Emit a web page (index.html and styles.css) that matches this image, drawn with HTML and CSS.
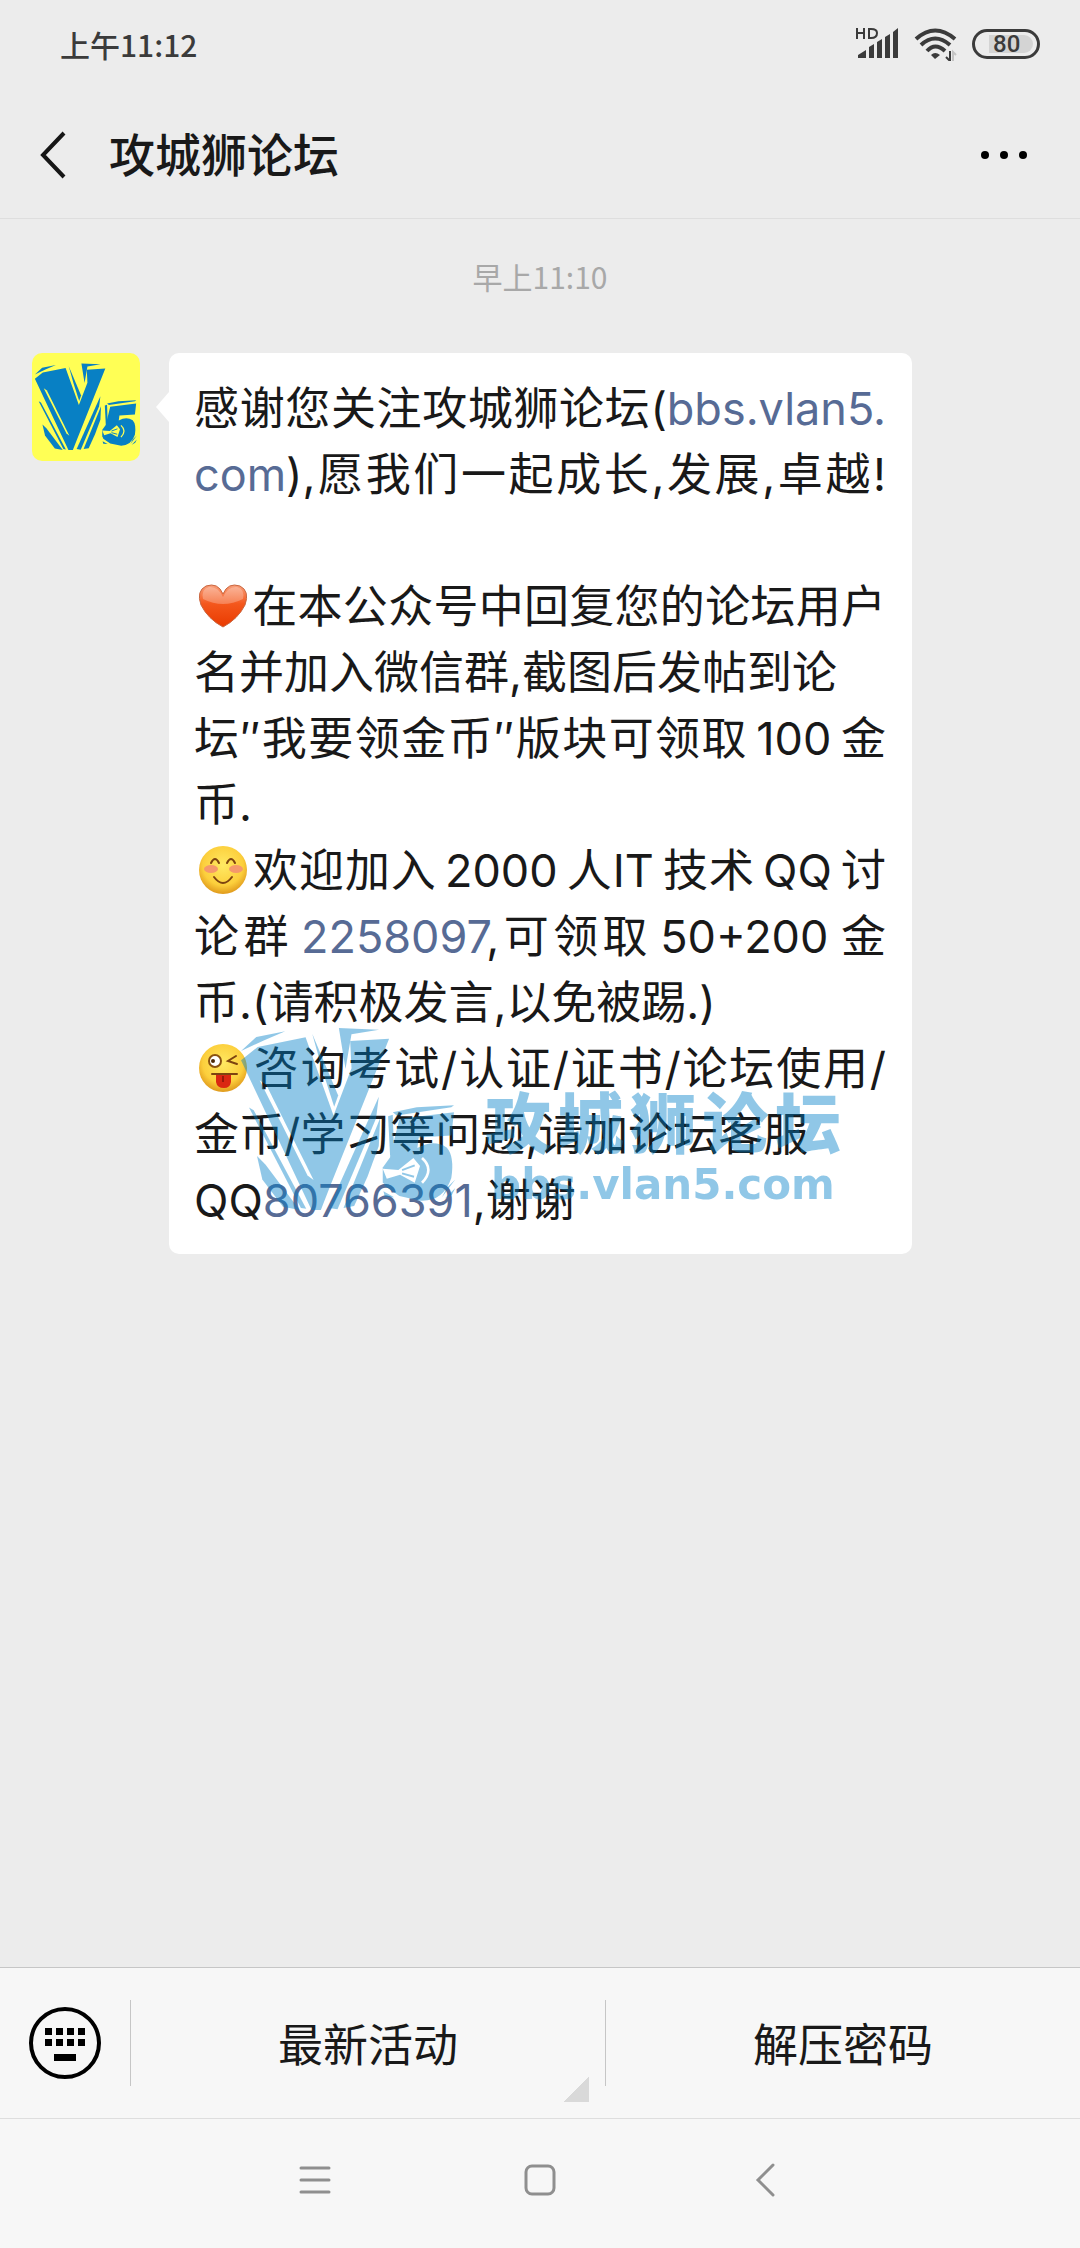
FILE: index.html
```html
<!DOCTYPE html>
<html lang="zh-CN">
<head>
    <meta charset="UTF-8">
    <title>攻城狮论坛</title>
    <meta name="viewport" content="width=device-width, initial-scale=1.0">
    <link rel="stylesheet" href="styles.css">
</head>
<body>

    <!-- Logo used by the avatar and the watermark -->
    <svg class="sprite" aria-hidden="true">
        <defs>
            <mask id="logo-cuts" maskUnits="userSpaceOnUse" x="60" y="50" width="680" height="580">
                <rect x="60" y="50" width="680" height="580" fill="#fff"/>
                <path d="M128 222 L148 236 L290 522 L272 508 Z" fill="#000"/>
                <path d="M498 488 L545 492 L590 456 L610 480 L594 530 L550 506 L510 518 Z" fill="#000"/>
                <path d="M616 456 Q654 490 616 530" fill="none" stroke="#000" stroke-width="8"/>
                <path d="M556 492 L594 478 M556 502 L592 512" stroke="#fff" stroke-width="6"/>
            </mask>
            <symbol id="v5" viewBox="70 62 650 556">
                <g fill="currentColor" mask="url(#logo-cuts)">
                    <path d="M72 134 L118 92 L205 75 L142 102 Z"/>
                    <path d="M72 162 L122 122 L266 93 L350 328 L404 186 L400 104 L517 97 L340 540 L312 612 L284 612 Z"/>
                    <path d="M366 65 L487 70 L404 84 L386 188 Z"/>
                    <path d="M286 82 L364 268 L352 302 L316 190 Z"/>
                    <path d="M96 304 L110 312 L268 608 L252 606 Z"/>
                    <path d="M120 450 L146 476 L248 612 L198 602 L136 520 Z"/>
                    <path d="M486 272 L478 336 L362 610 L336 606 Z"/>
                    <path d="M490 336 L486 420 L452 512 L412 600 L380 606 Z"/>
                    <path d="M528 318 L600 303 L712 297 L704 303 L540 328 Z"/>
                    <path d="M514 330 L528 326 L532 440 L520 450 Z"/>
                    <path d="M548 338 L712 318 L704 388 L606 394 L602 426 Q650 398 690 424 Q714 450 704 516 Q680 588 610 584 L548 570 L504 540 L500 508 L560 520 Q620 524 620 492 Q600 450 526 478 L520 452 Z"/>
                    <path d="M498 484 L530 440 L610 430 L640 480 L610 540 L540 560 L498 530 Z"/>
                    <path d="M500 556 L532 574 L504 572 Z"/>
                    <path d="M716 520 L676 574 L690 546 Z M716 546 L684 578 L706 566 Z"/>
                </g>
            </symbol>
            <radialGradient id="face" cx="50%" cy="40%" r="60%">
                <stop offset="0" stop-color="#ffe963"/>
                <stop offset="0.7" stop-color="#fccf3c"/>
                <stop offset="1" stop-color="#e09a1c"/>
            </radialGradient>
            <linearGradient id="heart" x1="0" y1="0" x2="0" y2="1">
                <stop offset="0" stop-color="#f9a07c"/>
                <stop offset="0.45" stop-color="#f4571c"/>
                <stop offset="1" stop-color="#e93a00"/>
            </linearGradient>
        </defs>
    </svg>

    <div class="screen">
        <header class="top">
            <div class="status-bar">
                <span>上午11:12</span>
                <div class="status-icons">
                    <svg class="signal" viewBox="0 0 44 34" aria-hidden="true">
                        <path d="M1 12V1M8 12V1M1 6H8M13 2V11H15Q21 11 21 6Q21 2 15 2Z" fill="none" stroke="#3b3b3b" stroke-width="2"/>
                        <path d="M2 28L10 23V31H2ZM13 20L18 17V31H13ZM21 15L26 12V31H21ZM29 10L34 7V31H29ZM37 5L42 1V31H37Z" fill="#3b3b3b"/>
                    </svg>
                    <svg class="wifi" viewBox="0 0 44 34" aria-hidden="true">
                        <g fill="none" stroke="#3b3b3b" stroke-width="4">
                            <path d="M2 12Q21 -5 41 12"/>
                            <path d="M7 18Q21 5 36 18"/>
                            <path d="M13 24Q21 15 31 24"/>
                        </g>
                        <path d="M17 28Q21 24 26 28L21 32Z" fill="#3b3b3b"/>
                        <path d="M36 24V34L32 30" fill="none" stroke="#3b3b3b" stroke-width="2"/>
                        <path d="M39 34V25L42 28" fill="none" stroke="#c4c4c4" stroke-width="2"/>
                    </svg>
                    <span class="battery"><span class="battery-level">80</span></span>
                </div>
            </div>
            <div class="title-bar">
                <button class="icon-button" aria-label="返回">
                    <svg class="back" viewBox="0 0 28 48"><path d="M25 2L4 24L25 46" fill="none" stroke="#161616" stroke-width="4"/></svg>
                </button>
                <h1>攻城狮论坛</h1>
                <button class="icon-button" aria-label="更多">
                    <svg class="more" viewBox="0 0 48 10"><circle cx="5" cy="5" r="4"/><circle cx="24" cy="5" r="4"/><circle cx="43" cy="5" r="4"/></svg>
                </button>
            </div>
        </header>

        <main class="chat">
            <p class="time">早上11:10</p>
            <div class="message">
                <div class="avatar"><svg viewBox="0 0 104 88"><use href="#v5" width="104" height="88"/></svg></div>
                <div class="bubble">
                    <p class="line full">感谢您关注攻城狮论坛(<a href="#">bbs.vlan5.</a></p>
                    <p class="line full"><a href="#">com</a>),愿我们一起成长,发展,卓越!</p>
                    <p class="line"></p>
                    <p class="line full"><svg class="emoji" viewBox="0 0 50 50"><path d="M25 46Q10 38 3 24Q-2 10 8 5Q20 1 25 13Q30 1 42 5Q52 10 47 24Q40 38 25 46Z" fill="url(#heart)" stroke="#c9663f" stroke-width="1"/><path d="M5 18Q3 8 11 6Q20 5 25 16Q30 5 39 6Q47 8 45 18Q25 28 5 18Z" fill="#fff" opacity="0.25"/></svg>在本公众号中回复您的论坛用户</p>
                    <p class="line">名并加入微信群,截图后发帖到论</p>
                    <p class="line full">坛″我要领金币″版块可领取&thinsp;100&thinsp;金</p>
                    <p class="line">币.</p>
                    <p class="line full"><svg class="emoji" viewBox="0 0 50 50"><circle cx="25" cy="25" r="24" fill="url(#face)"/><ellipse cx="13" cy="24" rx="7" ry="4" fill="#f5996b"/><ellipse cx="38" cy="24" rx="7" ry="4" fill="#f5996b"/><path d="M13 18Q17 10 21 18M29 18Q33 10 37 18M16 32Q25 44 34 32" fill="none" stroke="#7d4310" stroke-width="2" stroke-linecap="round"/></svg>欢迎加入&thinsp;2000&thinsp;人IT&thinsp;技术&thinsp;QQ&thinsp;讨</p>
                    <p class="line full">论群&thinsp;<a href="#">2258097</a>,可领取&thinsp;50+200&thinsp;金</p>
                    <p class="line">币.(请积极发言,以免被踢.)</p>
                    <p class="line full"><svg class="emoji" viewBox="0 0 50 50"><circle cx="25" cy="25" r="24" fill="url(#face)"/><circle cx="17" cy="18" r="6" fill="#fff" stroke="#8a5210" stroke-width="2"/><circle cx="15" cy="18" r="2" fill="#4d2a08"/><path d="M38 13L30 18L39 21M14 31H39" fill="none" stroke="#7d4310" stroke-width="2" stroke-linecap="round"/><path d="M18 32H33V39Q32 45 26 45Q19 45 18 39Z" fill="#da2712"/><path d="M25 33V39" stroke="#97180a" stroke-width="2"/></svg>咨询考试/认证/证书/论坛使用/</p>
                    <p class="line">金币/学习等问题,请加论坛客服</p>
                    <p class="line">QQ<a href="#">80766391</a>,谢谢</p>
                    <div class="watermark" aria-hidden="true">
                        <svg viewBox="0 0 217 185"><use href="#v5" width="217" height="185"/></svg>
                        <div class="watermark-text">
                            <p class="watermark-name">攻城狮论坛</p>
                            <p class="watermark-url">bbs.vlan5.com</p>
                        </div>
                    </div>
                </div>
            </div>
        </main>

        <footer>
            <div class="menu-bar">
                <button class="keyboard" aria-label="键盘">
                    <svg viewBox="0 0 74 74">
                        <circle cx="37" cy="37" r="34" fill="none" stroke="#000" stroke-width="4"/>
                        <path d="M17 22h7v7h-7zM28 22h7v7h-7zM39 22h7v7h-7zM50 22h7v7h-7zM17 33h7v7h-7zM28 33h7v7h-7zM39 33h7v7h-7zM50 33h7v7h-7zM26 48h22v7h-22z"/>
                    </svg>
                </button>
                <button class="menu-item has-more">最新活动</button>
                <button class="menu-item">解压密码</button>
            </div>
            <nav class="system-nav">
                <button aria-label="最近任务"><svg viewBox="0 0 36 36"><path d="M4 6H32M4 18H32M4 30H32"/></svg></button>
                <button aria-label="主屏幕"><svg viewBox="0 0 36 36"><rect x="4" y="4" width="28" height="28" rx="6"/></svg></button>
                <button aria-label="返回"><svg viewBox="0 0 36 36"><path d="M26 3L11 18L26 33"/></svg></button>
            </nav>
        </footer>
    </div>

</body>
</html>
```

FILE: styles.css
```css
* {
    margin: 0;
    padding: 0;
    box-sizing: border-box;
}

body {
    font-family: "Noto Sans CJK SC", sans-serif;
    background-color: #ececec;
    color: #191919;
}

button {
    border: none;
    background: none;
    font: inherit;
    color: inherit;
    cursor: pointer;
}

svg {
    display: block;
}

a {
    color: #576b95;
    text-decoration: none;
}

.sprite {
    position: absolute;
    width: 0;
    height: 0;
}

.screen {
    display: flex;
    flex-direction: column;
    min-height: 100vh;
}

/* Status bar and title */
.top {
    border-bottom: 1px solid #dedede;
}

.status-bar {
    display: flex;
    align-items: center;
    justify-content: space-between;
    height: 88px;
    padding: 0 40px 0 60px;
    font-size: 30px;
    font-weight: 500;
    color: #3b3b3b;
}

.status-icons {
    display: flex;
    align-items: center;
    gap: 14px;
}

.signal,
.wifi {
    width: 44px;
    height: 34px;
}

.battery {
    width: 68px;
    height: 30px;
    padding: 3px 4px 3px 14px;
    border: 3px solid #3b3b3b;
    border-radius: 15px;
}

.battery-level {
    display: block;
    height: 18px;
    padding-left: 4px;
    border-radius: 0 9px 9px 0;
    background-color: #d4d4d4;
    font-family: Roboto, sans-serif;
    font-size: 24px;
    line-height: 18px;
}

.title-bar {
    display: flex;
    align-items: center;
    height: 130px;
    padding: 4px 52px 0 39px;
}

.title-bar h1 {
    flex: 1;
    margin-left: 42px;
    padding-bottom: 6px;
    font-size: 46px;
    font-weight: 500;
    line-height: 66px;
}

.back {
    width: 28px;
    height: 48px;
}

.more {
    width: 48px;
    height: 10px;
}

/* Chat */
.chat {
    flex: 1;
    padding: 36px 32px;
}

.time {
    margin-bottom: 56px;
    font-size: 30px;
    line-height: 42px;
    text-align: center;
    color: #a8a8a8;
}

.message {
    display: flex;
    align-items: flex-start;
    gap: 29px;
}

.avatar {
    display: flex;
    align-items: center;
    justify-content: center;
    flex: none;
    width: 108px;
    height: 108px;
    border-radius: 10px;
    background-color: #ffff55;
    color: #0880c4;
}

.avatar svg {
    width: 104px;
    height: 88px;
}

.bubble {
    position: relative;
    flex: 0 1 743px;
    min-width: 0;
    padding: 23px 26px 20px 25px;
    border-radius: 10px;
    background-color: #fff;
    font-family: Inter, "Noto Sans CJK SC", sans-serif;
    font-size: 45px;
    line-height: 66px;
}

.bubble::before {
    content: "";
    position: absolute;
    top: 39px;
    left: -13px;
    border: solid transparent;
    border-width: 15px 13px 15px 0;
    border-right-color: #fff;
}

.line {
    height: 66px;
    white-space: nowrap;
}

.full {
    text-align-last: justify;
}

.emoji {
    display: inline-block;
    width: 50px;
    height: 50px;
    margin: 0 4px;
    vertical-align: -8px;
}

.watermark {
    position: absolute;
    right: 71px;
    bottom: 39px;
    display: flex;
    gap: 28px;
    color: #0080c8;
    opacity: 0.43;
}

.watermark svg {
    width: 217px;
    height: 185px;
}

.watermark-text {
    width: 356px;
    padding-top: 56px;
}

.watermark-name {
    font-family: "Noto Sans CJK SC", sans-serif;
    font-size: 66px;
    font-weight: 900;
    line-height: 72px;
    text-align-last: justify;
}

.watermark-url {
    font-family: "DejaVu Sans", sans-serif;
    font-size: 42px;
    font-weight: bold;
    line-height: 60px;
    text-align: center;
}

/* Bottom menu */
footer {
    background-color: #f7f7f7;
}

.menu-bar {
    display: flex;
    align-items: center;
    height: 151px;
    border-top: 1px solid #c6c6c6;
}

.keyboard {
    width: 130px;
    padding-left: 28px;
}

.keyboard svg {
    width: 74px;
    height: 74px;
}

.menu-item {
    position: relative;
    flex: 1;
    height: 86px;
    border-left: 1px solid #c6c6c6;
    font-size: 45px;
    line-height: 66px;
}

.has-more::after {
    content: "";
    position: absolute;
    right: 16px;
    bottom: -16px;
    width: 26px;
    height: 26px;
    background: linear-gradient(135deg, transparent 50%, #d9d9d9 50%);
}

.system-nav {
    display: flex;
    align-items: center;
    justify-content: center;
    height: 130px;
    padding-bottom: 8px;
    border-top: 1px solid #dedede;
}

.system-nav button {
    display: flex;
    justify-content: center;
    width: 225px;
}

.system-nav svg {
    width: 36px;
    height: 36px;
    fill: none;
    stroke: #8f8f8f;
    stroke-width: 3;
    stroke-linecap: round;
}
```
